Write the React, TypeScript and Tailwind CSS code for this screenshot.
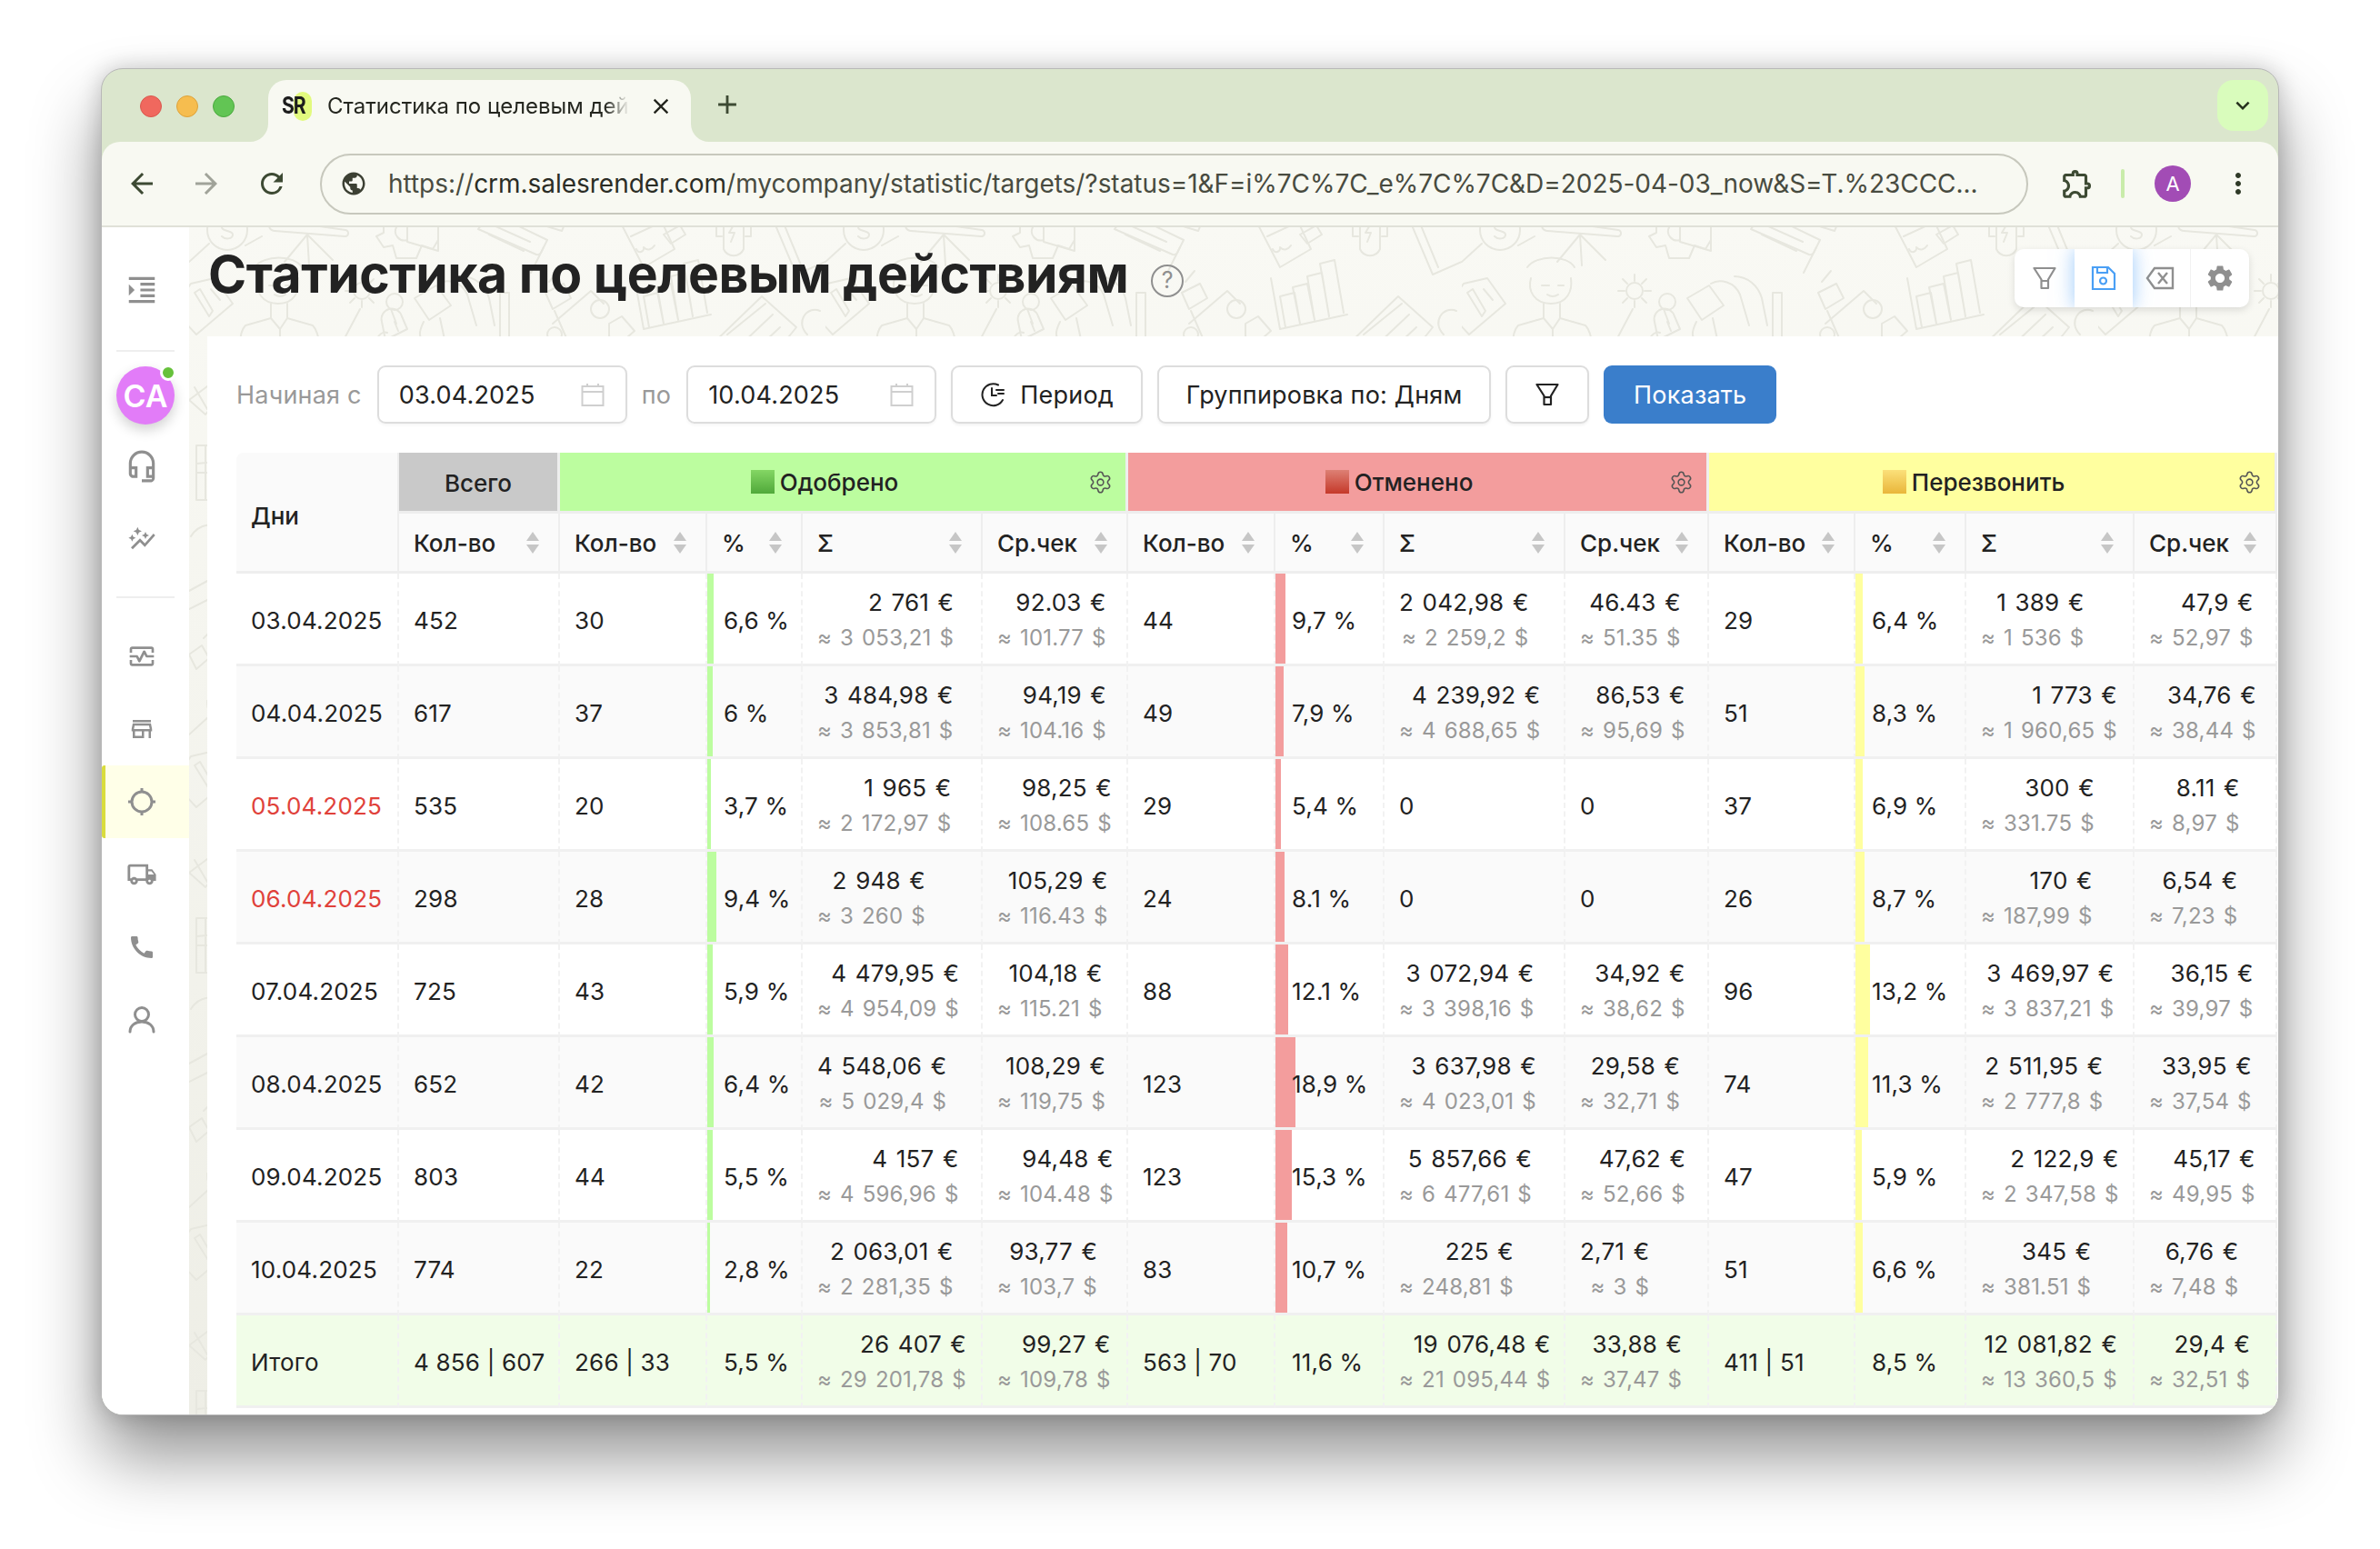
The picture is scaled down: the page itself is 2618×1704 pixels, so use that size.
import React from "react";
import { Settings } from "lucide-react";
import {
  MdOutlineHeadsetMic, MdAutoGraph, MdOutlineMonitorHeart, MdOutlineStore, MdOutlineLocalShipping, MdCall,
  MdOutlineExtension, MdPublic, MdArrowBack, MdArrowForward, MdRefresh, MdSettings, MdFormatIndentIncrease,
  MdClose, MdAdd, MdKeyboardArrowDown, MdMoreVert,
} from "react-icons/md";

type Amt = [string, string] | string;
type Group = { n: string; p: string; s: Amt; a: Amt };
type Row = { d: string; red?: boolean; t: string; g: [Group, Group, Group] };

const G = (n: string, p: string, s: Amt, a: Amt): Group => ({ n, p, s, a });

const rows: Row[] = [
  { d: "03.04.2025", t: "452", g: [
    G("30", "6,6 %", ["2 761 €", "≈ 3 053,21 $"], ["92.03 €", "≈ 101.77 $"]),
    G("44", "9,7 %", ["2 042,98 €", "≈ 2 259,2 $"], ["46.43 €", "≈ 51.35 $"]),
    G("29", "6,4 %", ["1 389 €", "≈ 1 536 $"], ["47,9 €", "≈ 52,97 $"]) ] },
  { d: "04.04.2025", t: "617", g: [
    G("37", "6 %", ["3 484,98 €", "≈ 3 853,81 $"], ["94,19 €", "≈ 104.16 $"]),
    G("49", "7,9 %", ["4 239,92 €", "≈ 4 688,65 $"], ["86,53 €", "≈ 95,69 $"]),
    G("51", "8,3 %", ["1 773 €", "≈ 1 960,65 $"], ["34,76 €", "≈ 38,44 $"]) ] },
  { d: "05.04.2025", red: true, t: "535", g: [
    G("20", "3,7 %", ["1 965 €", "≈ 2 172,97 $"], ["98,25 €", "≈ 108.65 $"]),
    G("29", "5,4 %", "0", "0"),
    G("37", "6,9 %", ["300 €", "≈ 331.75 $"], ["8.11 €", "≈ 8,97 $"]) ] },
  { d: "06.04.2025", red: true, t: "298", g: [
    G("28", "9,4 %", ["2 948 €", "≈ 3 260 $"], ["105,29 €", "≈ 116.43 $"]),
    G("24", "8.1 %", "0", "0"),
    G("26", "8,7 %", ["170 €", "≈ 187,99 $"], ["6,54 €", "≈ 7,23 $"]) ] },
  { d: "07.04.2025", t: "725", g: [
    G("43", "5,9 %", ["4 479,95 €", "≈ 4 954,09 $"], ["104,18 €", "≈ 115.21 $"]),
    G("88", "12.1 %", ["3 072,94 €", "≈ 3 398,16 $"], ["34,92 €", "≈ 38,62 $"]),
    G("96", "13,2 %", ["3 469,97 €", "≈ 3 837,21 $"], ["36,15 €", "≈ 39,97 $"]) ] },
  { d: "08.04.2025", t: "652", g: [
    G("42", "6,4 %", ["4 548,06 €", "≈ 5 029,4 $"], ["108,29 €", "≈ 119,75 $"]),
    G("123", "18,9 %", ["3 637,98 €", "≈ 4 023,01 $"], ["29,58 €", "≈ 32,71 $"]),
    G("74", "11,3 %", ["2 511,95 €", "≈ 2 777,8 $"], ["33,95 €", "≈ 37,54 $"]) ] },
  { d: "09.04.2025", t: "803", g: [
    G("44", "5,5 %", ["4 157 €", "≈ 4 596,96 $"], ["94,48 €", "≈ 104.48 $"]),
    G("123", "15,3 %", ["5 857,66 €", "≈ 6 477,61 $"], ["47,62 €", "≈ 52,66 $"]),
    G("47", "5,9 %", ["2 122,9 €", "≈ 2 347,58 $"], ["45,17 €", "≈ 49,95 $"]) ] },
  { d: "10.04.2025", t: "774", g: [
    G("22", "2,8 %", ["2 063,01 €", "≈ 2 281,35 $"], ["93,77 €", "≈ 103,7 $"]),
    G("83", "10,7 %", ["225 €", "≈ 248,81 $"], ["2,71 €", "≈ 3 $"]),
    G("51", "6,6 %", ["345 €", "≈ 381.51 $"], ["6,76 €", "≈ 7,48 $"]) ] },
];

const total: Row = { d: "Итого", t: "4 856 | 607", g: [
  G("266 | 33", "5,5 %", ["26 407 €", "≈ 29 201,78 $"], ["99,27 €", "≈ 109,78 $"]),
  G("563 | 70", "11,6 %", ["19 076,48 €", "≈ 21 095,44 $"], ["33,88 €", "≈ 37,47 $"]),
  G("411 | 51", "8,5 %", ["12 081,82 €", "≈ 13 360,5 $"], ["29,4 €", "≈ 32,51 $"]) ] };

const widths = [179, 177, 162, 105, 198, 160, 162, 120, 199, 158, 161, 122, 185, 157];
const barColors = ["#bcfd9f", "#f39d9d", "#ffff9f"];

function Sort() {
  return (
    <svg width="16" height="26" viewBox="0 0 16 26" className="shrink-0">
      <path d="M8 1 L15 11 H1 Z" fill="#c6c6c6" />
      <path d="M8 25 L15 15 H1 Z" fill="#c6c6c6" />
    </svg>
  );
}

function Th({ label }: { label: string }) {
  return (
    <th className="h-[66px] border-b-[3px] border-r-2 border-[#eeeeee] bg-[#fafafa] pl-[16px] pr-[20px] text-left font-medium tracking-[0px]">
      <div className="flex items-center justify-between">
        <span className="pt-[2px]">{label}</span>
        <Sort />
      </div>
    </th>
  );
}

function Money({ v }: { v: Amt }) {
  if (typeof v === "string") return <span>{v}</span>;
  return (
    <span className="inline-block text-right align-middle leading-[38px] [word-spacing:2px]">
      <span className="block whitespace-nowrap">{v[0]}</span>
      <span className="mt-[1px] block whitespace-nowrap text-[24px] text-[#999999]">{v[1]}</span>
    </span>
  );
}

const tdBase = "border-b-[3px] border-b-[#f0f0f0] border-r-2 border-r-[#f2f2f2] border-dashed [border-bottom-style:solid] pl-[16px] pt-[3px] whitespace-nowrap";

function DataRow({ r, bg, bars }: { r: Row; bg: string; bars: boolean }) {
  return (
    <tr className="h-[102px]" style={{ background: bg }}>
      <td className={tdBase + (r.red ? " text-[#e0413a]" : "")}>{r.d}</td>
      <td className={tdBase}>{r.t}</td>
      {r.g.map((g, i) => (
        <React.Fragment key={i}>
          <td className={tdBase}>{g.n}</td>
          <td className={tdBase + " relative !pl-[18px]"}>
            {bars && (
              <span className="absolute inset-y-0 left-0" style={{ width: `${parseFloat(g.p.replace(",", "."))}%`, background: barColors[i] }} />
            )}
            <span className="relative">{g.p}</span>
          </td>
          <td className={tdBase}><Money v={g.s} /></td>
          <td className={tdBase}><Money v={g.a} /></td>
        </React.Fragment>
      ))}
    </tr>
  );
}

function GroupHead({ label, bg, from, to }: { label: string; bg: string; from: string; to: string }) {
  return (
    <th colSpan={4} className="relative border-b-[3px] border-r-[3px] border-[#eeeeee] pr-[40px] text-center font-medium tracking-[0px]" style={{ background: bg }}>
      <span className="inline-flex items-center gap-[6px] pt-[4px]">
        <span className="h-[26px] w-[26px]" style={{ background: `linear-gradient(${from}, ${to})` }} />
        {label}
      </span>
      <Settings size={27} strokeWidth={1.4} color="#555555" className="absolute right-[14px] top-[19px]" />
    </th>
  );
}

function Doodles() {
  const s = { fill: "none", stroke: "#e7e7df", strokeWidth: 2, strokeLinecap: "round" as const, strokeLinejoin: "round" as const };
  return (
    <svg className="absolute inset-0 h-full w-full" aria-hidden="true">
      <defs>
        <pattern id="doodle" patternUnits="userSpaceOnUse" width="700" height="520">
          <g {...s}>
            {/* dollar coin */}
            <circle cx="42" cy="3" r="22" />
            <path d="M48 -2c-4-4-12-3-12 2s12 3 12 8-8 6-12 2" />
            <path d="M22 18 L0 38 M62 20 L80 10" />
            {/* presentation board */}
            <path d="M94 -8 L172 3 a3 3 0 0 1 -1 7 L94 4 a4 4 0 0 1 0-12Z" />
            <path d="M104 -5V-20M150 0V-20M130 8 L105 38M130 8 L132 42M130 8 L158 36" />
            {/* gear and megaphone */}
            <path d="M222 -10h-8v16l-8 4 8 12 10-2 4 14h22l6-14 12 4 6-10" />
            <path d="M240 -10v26l34 10V-14Z M228 0a10 10 0 0 0 12 14" />
            {/* note */}
            <path d="M318 2 L382 30 a5 5 0 0 0 6-4 L394 14 L332 -16 Z" />
            <path d="M335 -2 L375 16M330 8 L368 26" />
            <path d="M390 22 L376 50M350 -14 L410 4 L416 -10" />
            {/* document */}
            <path d="M470 -14 L500 44 L534 24 L520 -6" />
            <path d="M480 -2 L506 -14M486 10 L512 -2M492 24 a4 4 0 0 0 8 -2 q6 6 12 -2" />
            <path d="M522 8 L540 -2 L546 8 L530 18Z" />
            {/* bulb */}
            <path d="M572 -4a5 5 0 0 1 8 0v14h6M626 -4a5 5 0 0 0-8 0v14h-6" />
            <path d="M588 -14v38a12 12 0 0 0 22 0V-14" />
            <path d="M600 -4l-6 10h6l-4 10" />
            {/* pencil */}
            <path d="M640 -14 L668 52 L700 38" />
            <path d="M650 -14 L674 44" />

            {/* tie on doc */}
            <path d="M2 62 L28 56 L48 84 L8 118 L-18 90Z" />
            <path d="M6 72 L22 98 L26 92 L12 68Z M24 68 L34 80" />
            {/* person */}
            <path d="M76 56c-4 14 4 28 22 28s24-14 22-28M72 44c10-14 44-14 52 0" />
            <path d="M90 84v16L62 108c-4 4-6 10-6 22M108 84v16l28 8c4 4 6 10 8 22" />
            <path d="M90 100 L100 112 L108 100M100 112v14" />
            <path d="M88 64h8M106 64h6M94 74q6 4 12 0" />
            {/* gear & org */}
            <circle cx="190" cy="70" r="9" />
            <path d="M190 52v7M190 81v7M172 70h7M201 70h7M177 57l5 5M198 78l5 5M203 57l-5 5M182 78l-5 5" />
            <path d="M188 90 L170 124M222 90 L228 106" />
            <circle cx="226" cy="82" r="9" />
            <path d="M212 104 a10 10 0 0 1 22 -6 l6 14 -24 12Z M206 124c2-6 8-10 12-8M226 104l4 10" />
            {/* hand/tools */}
            <path d="M248 78 L272 64 L288 86 L264 102Z" />
            <path d="M274 62c10-6 26-2 32 12l10 34M300 54c14 0 26 10 30 24l6 30" />
            <path d="M258 104c-6 12 -6 20 4 22h24M276 100l6 28" />
            <path d="M342 72h10v52h-10Z" />
            {/* org chart */}
            <path d="M392 72 L412 62 L420 78 L400 90Z M396 60l10-12 M402 92l14 32" />
            <path d="M400 106 L442 70 L456 84" />
            <circle cx="452" cy="90" r="10" />
            <path d="M462 106l14-8 14 16-16 14-12-8Z" />
            <circle cx="402" cy="118" r="8" />
            {/* bars */}
            <path d="M490 56 L500 112 L574 96" />
            <path d="M506 110 L500 76 L516 72 L522 106M522 106 L514 66 L530 62 L538 102M538 102 L530 54 L546 50 L554 98M554 98 L544 40 L560 36 L570 94" />
            {/* paper */}
            <path d="M574 130 L630 76 L668 110 L660 120 L618 165" />
            <path d="M592 118 L634 84M606 130 L642 96M618 140 L650 110" />
            <path d="M590 126 a6 6 0 0 0 10 6 q4 4 8 0" />
            {/* mouse and gear */}
            <path d="M680 118c-14-14 0-32 14-26" />
            <circle cx="640" cy="-30" r="10" />

            {/* second band, visible in the left strip */}
            <path d="M0 190 L24 172 L34 186 L18 206 Z M6 176 L20 200" />
            <path d="M8 240 L30 240 M8 260 L30 258 M8 240 V300 M30 240 V300 M8 300 H30 M8 270 H30 M18 240 V300" />
            <path d="M2 340 a26 26 0 0 1 40 -6" />
            <path d="M0 400 L22 388 L38 400 M0 420 L24 408 L38 422" />
            <path d="M0 470 L14 460 L22 474 L8 486 Z M16 452 L30 438" />
            <path d="M100 190 l60 -30 l30 40 l-60 30 Z M112 200 l44 -22" />
            <circle cx="300" cy="220" r="26" />
            <path d="M300 206v28M290 214h18M290 226h18" />
            <path d="M460 200h80v60h-80Z M470 216h60M470 232h60" />
            <path d="M600 260 L660 230 L680 270 L620 300 Z" />
            <circle cx="150" cy="380" r="24" />
            <path d="M380 350 L440 330 L460 390 L400 410 Z" />
            <path d="M540 370h70v10h-70Z M560 380 L548 420M590 380 L602 420" />
          </g>
        </pattern>
      </defs>
      <rect width="100%" height="100%" fill="url(#doodle)" />
    </svg>
  );
}

function Funnel({ color, size = 26 }: { color: string; size?: number }) {
  return (
    <svg width={size} height={size} viewBox="0 0 26 26" fill="none" stroke={color} strokeWidth="2.2" strokeLinejoin="round">
      <path d="M1.5 2 H24.5 L17 14.5 V24 H9.5 V14.5 Z" />
      <path d="M9.5 16 H17" />
    </svg>
  );
}

function CalendarIcon() {
  return (
    <svg width="26" height="26" viewBox="0 0 26 26" fill="none" stroke="#cfcfcf" strokeWidth="2">
      <rect x="1.5" y="4" width="23" height="21" />
      <path d="M1.5 10 H24.5 M7 1 V5 M19 1 V5" />
    </svg>
  );
}

function DateBox({ value }: { value: string }) {
  return (
    <div className="flex h-[64px] w-[275px] items-center justify-between rounded-[9px] border-2 border-[#dddddd] pl-[22px] pr-[23px] shadow-[0_2px_3px_rgba(0,0,0,0.04)]">
      <span className="pt-[2px] text-[#222222]">{value}</span>
      <CalendarIcon />
    </div>
  );
}

const btn = "flex h-[64px] items-center justify-center rounded-[9px] border-2 border-[#dddddd] bg-white text-[#222222] shadow-[0_2px_3px_rgba(0,0,0,0.05)]";

function SideItem({ children, active }: { children: React.ReactNode; active?: boolean }) {
  return (
    <div className={"flex h-[80px] items-center justify-center text-[#8f8f8f] " + (active ? "rounded-l-[3px] border-l-4 border-l-[#d9dc3d] bg-[#ffffe8] pr-[12px]" : "pr-[8px]")}>
      {children}
    </div>
  );
}

export default function App() {
  return (
    <div className="h-[1704px] w-[2618px] overflow-hidden bg-white pl-[111px] pt-[75px] [font-family:Inter,sans-serif]">
      <div className="flex h-[1482px] w-[2396px] flex-col overflow-hidden rounded-[24px] border border-[#b8b8b8] bg-[#dbe6cd] shadow-[0_46px_76px_rgba(0,0,0,0.42),0_0_26px_rgba(0,0,0,0.2)]">
        {/* tab strip */}
        <div className="flex h-[80px] shrink-0 items-end pl-[42px]">
          <div className="flex h-[68px] items-center gap-[16px] self-end pb-[10px]">
            <span className="h-[24px] w-[24px] rounded-full border border-[#d9584e] bg-[#f0685e]" />
            <span className="h-[24px] w-[24px] rounded-full border border-[#dda23a] bg-[#f6bd4f]" />
            <span className="h-[24px] w-[24px] rounded-full border border-[#4aa83e] bg-[#62c554]" />
          </div>
          <div className="relative ml-[37px] flex h-[68px] w-[465px] items-center rounded-t-[20px] bg-[#f8f9f2] pb-[11px] pl-[15px] text-[#24261f]">
            <svg width="20" height="20" viewBox="0 0 20 20" className="absolute -left-[20px] bottom-0"><path d="M20 0 A20 20 0 0 1 0 20 H20 Z" fill="#f8f9f2" /></svg>
            <svg width="20" height="20" viewBox="0 0 20 20" className="absolute -right-[20px] bottom-0"><path d="M0 0 A20 20 0 0 0 20 20 H0 Z" fill="#f8f9f2" /></svg>
            <span className="relative flex h-[32px] w-[34px] items-center">
              <span className="absolute left-[13px] top-0 h-[32px] w-[20px] rounded-full bg-[#e2fa7e]" />
              <span className="relative origin-left scale-x-[0.85] text-[25px] font-bold tracking-[-1.5px] text-[#1d1d1d]">SR</span>
            </span>
            <span className="ml-[16px] w-[332px] overflow-hidden whitespace-nowrap text-[24px] [mask-image:linear-gradient(to_right,black_92%,transparent)]">Статистика по целевым дей</span>
            <MdClose size={28} className="ml-[21px] text-[#24261f]" />
          </div>
          <div className="mb-[21px] ml-[23px] flex h-[40px] items-center">
            <MdAdd size={34} className="text-[#3d4a33]" />
          </div>
          <div className="mb-[12px] ml-auto mr-[11px] flex h-[56px] w-[56px] items-center justify-center rounded-[18px] bg-[#d9fcbc]">
            <MdKeyboardArrowDown size={30} className="text-[#25301c]" />
          </div>
        </div>
        {/* toolbar */}
        <div className="flex h-[94px] shrink-0 items-center rounded-t-[20px] border-b-2 border-[#e0e1d8] bg-[#f8f9f2] pl-[26px] pr-[24px] text-[#3d4a33]">
          <MdArrowBack size={36} />
          <MdArrowForward size={36} className="ml-[35px] text-[#a0a399]" />
          <MdRefresh size={36} className="ml-[36px]" />
          <div className="ml-[35px] flex h-[67px] w-[1879px] items-center rounded-full border-2 border-[#c7c8bd] pl-[20px]">
            <MdPublic size={30} className="text-[#3c4033]" />
            <span className="ml-[23px] whitespace-nowrap text-[28px] tracking-[-0.03px] text-[#484b40]">
              https://<span className="text-[#2b2d25]">crm.salesrender.com</span>/mycompany/statistic/targets/?status=1&amp;F=i%7C%7C_e%7C%7C&amp;D=2025-04-03_now&amp;S=T.%23CCC...
            </span>
          </div>
          <MdOutlineExtension size={38} className="ml-[35px]" />
          <span className="ml-[29px] h-[32px] w-[4px] rounded-full bg-[#c9ecaa]" />
          <span className="ml-[33px] flex h-[40px] w-[40px] items-center justify-center rounded-full bg-[#a24cb5] text-[22px] text-white">A</span>
          <MdMoreVert size={36} className="ml-[34px] text-[#2f3a27]" />
        </div>
        {/* body */}
        <div className="flex min-h-0 flex-1 bg-white">
          <div className="w-[96px] shrink-0 bg-white">
            <div className="flex h-[137px] flex-col justify-center">
              <SideItem><MdFormatIndentIncrease size={38} /></SideItem>
            </div>
            <div className="mx-[16px] -mt-[2px] h-[2px] bg-[#eeeeee]" />
            <div className="flex h-[86px] items-center pl-[16px] pt-[10px]">
              <div className="relative flex h-[64px] w-[64px] items-center justify-center rounded-full bg-[#e27cf8] text-[34px] font-semibold text-white shadow-[0_6px_14px_rgba(0,0,0,0.18)]">
                CA
                <span className="absolute -right-[2px] -top-[2px] h-[18px] w-[18px] rounded-full border-[3px] border-white bg-[#66c13b]" />
              </div>
            </div>
            <SideItem><MdOutlineHeadsetMic size={38} /></SideItem>
            <SideItem><MdAutoGraph size={32} /></SideItem>
            <div className="mx-[16px] mt-[23px] h-[2px] bg-[#eeeeee]" />
            <div className="h-[24px]" />
            <SideItem><MdOutlineMonitorHeart size={32} /></SideItem>
            <SideItem><MdOutlineStore size={30} /></SideItem>
            <SideItem active>
              <svg width="32" height="32" viewBox="0 0 32 32" fill="none" stroke="currentColor" strokeWidth="3">
                <circle cx="16" cy="16" r="11" />
                <path d="M16 1V5M16 27V31M1 16H5M27 16H31" />
              </svg>
            </SideItem>
            <SideItem><MdOutlineLocalShipping size={34} /></SideItem>
            <SideItem><MdCall size={32} /></SideItem>
            <SideItem>
              <svg width="30" height="30" viewBox="0 0 30 30" fill="none" stroke="currentColor" strokeWidth="3" strokeLinecap="round">
                <circle cx="15" cy="9" r="7.5" />
                <path d="M2 28c0-7 6-11 13-11s13 4 13 11" />
              </svg>
            </SideItem>
          </div>
          <div className="relative flex min-w-0 flex-1 flex-col bg-gradient-to-b from-[#f9f9f4] to-[#eeeee6]">
            <Doodles />
            <div className="relative flex h-[120px] shrink-0 items-start justify-between pl-[21px] pr-[32px]">
              <div className="mt-[14px] flex items-center">
                <h1 className="text-[57px] font-bold leading-[76px] tracking-[-0.47px] text-[#222222]">Статистика по целевым действиям</h1>
                <span className="ml-[25px] mt-[14px] flex h-[36px] w-[36px] items-center justify-center rounded-full border-2 border-[#8f8f8f] text-[25px] text-[#8f8f8f]">?</span>
              </div>
              <div className="mt-[24px] flex h-[64px] overflow-hidden rounded-[10px] bg-white shadow-[0_3px_8px_rgba(0,0,0,0.12)]">
                <div className="flex w-[66px] items-center justify-center"><Funnel color="#8f8f8f" /></div>
                <div className="relative flex w-[64px] items-center justify-center bg-white shadow-[0_0_20px_rgba(74,159,245,0.55)]">
                  <svg width="28" height="28" viewBox="0 0 28 28" fill="none" stroke="#4a9ff5" strokeWidth="2.2">
                    <path d="M2 2 H19 L26 9 V26 H2 Z" />
                    <path d="M7 2 V8 H18 V2" />
                    <circle cx="13.5" cy="17" r="3.5" />
                  </svg>
                </div>
                <div className="flex w-[64px] items-center justify-center border-r border-[#f2f2f2] pr-[3px] shadow-[-4px_0_6px_rgba(0,0,0,0.03)]">
                  <svg width="32" height="26" viewBox="0 0 32 26" fill="none" stroke="#8f8f8f" strokeWidth="2.4">
                    <path d="M10 2 H30 V24 H10 L2 13 Z" />
                    <path d="M14 7 L24 19 M24 7 L14 19" />
                  </svg>
                </div>
                <div className="flex w-[64px] items-center justify-center"><MdSettings size={34} className="text-[#8f8f8f]" /></div>
              </div>
            </div>
            <div className="relative ml-[20px] flex min-h-0 flex-1 flex-col bg-white pl-[32px] pr-[1px] text-[#222222]">
              <div className="mt-[32px] flex h-[64px] shrink-0 items-center text-[27px] tracking-[0.2px]">
                <span className="pt-[2px] text-[#999999]">Начиная с</span>
                <div className="ml-[17px]"><DateBox value="03.04.2025" /></div>
                <span className="ml-[16px] pt-[2px] text-[#999999]">по</span>
                <div className="ml-[17px]"><DateBox value="10.04.2025" /></div>
                <div className={btn + " ml-[16px] w-[211px] gap-[16px]"}>
                  <svg width="28" height="28" viewBox="0 0 28 28" fill="none" stroke="#222222" strokeWidth="2" strokeLinecap="round">
                    <path d="M25 20A12 12 0 1 1 20 3.5" />
                    <path d="M13 7V15H18M18 9H26M20 13H26" />
                  </svg>
                  <span className="pt-[2px]">Период</span>
                </div>
                <div className={btn + " ml-[16px] w-[367px] pt-[2px]"}>Группировка по: Дням</div>
                <div className={btn + " ml-[16px] w-[92px]"}><Funnel color="#222222" /></div>
                <div className="ml-[16px] flex h-[64px] w-[190px] items-center justify-center rounded-[9px] bg-[#3a7ecb] pt-[2px] text-white">Показать</div>
              </div>
              <table className="mt-[32px] w-[2245px] table-fixed border-separate border-spacing-0 text-[26px] tracking-[0.2px]">
                <colgroup>
                  {widths.map((w, i) => <col key={i} style={{ width: w }} />)}
                </colgroup>
                <thead>
                  <tr className="h-[67px]">
                    <th rowSpan={2} className="rounded-tl-[8px] border-b-[3px] border-r-2 border-[#eeeeee] bg-[#fafafa] pl-[16px] pt-[9px] text-left font-medium tracking-[0px]">Дни</th>
                    <th className="border-b-[3px] border-r-[3px] border-[#eeeeee] bg-[#c9c9c9] pt-[2px] text-center font-medium tracking-[0px]">Всего</th>
                    <GroupHead label="Одобрено" bg="#bcfd9f" from="#84d664" to="#50a93a" />
                    <GroupHead label="Отменено" bg="#f39d9d" from="#dd8074" to="#c5392a" />
                    <GroupHead label="Перезвонить" bg="#ffff9f" from="#fbe07a" to="#e9b63a" />
                  </tr>
                  <tr>
                    <Th label="Кол-во" />
                    {["Кол-во", "%", "Σ", "Ср.чек", "Кол-во", "%", "Σ", "Ср.чек", "Кол-во", "%", "Σ", "Ср.чек"].map((l, i) => <Th key={i} label={l} />)}
                  </tr>
                </thead>
                <tbody>
                  {rows.map((r, i) => <DataRow key={i} r={r} bars bg={i % 2 ? "#fafafa" : "#ffffff"} />)}
                  <DataRow r={total} bars={false} bg="#f1fde8" />
                </tbody>
              </table>
            </div>
          </div>
        </div>
      </div>
    </div>
  );
}
